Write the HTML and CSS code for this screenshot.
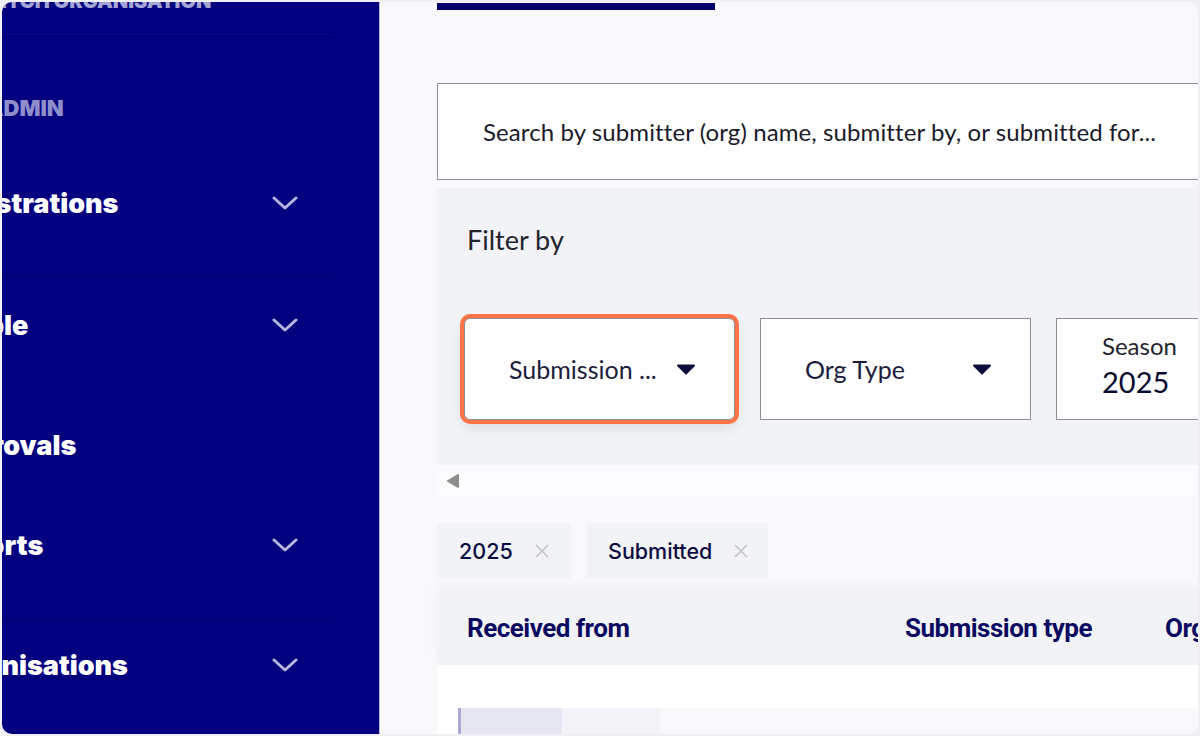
FILE: index.html
```html
<!DOCTYPE html>
<html lang="en">
<head>
<meta charset="utf-8">
<title>Submissions</title>
<link rel="stylesheet" href="styles.css">
</head>
<body>
<div class="frame">
  <aside class="sidebar">
    <div class="side-inner">
      <div class="switch-org">SWITCH ORGANISATION</div>
      <div class="divider divider-light"></div>
      <div class="section-label">ADMIN</div>
      <div class="nav-item nav-reg">
        <span class="nav-text">Registrations</span>
        <svg class="chev" width="26" height="15" viewBox="0 0 26 15"><polyline points="2,2 13,12 24,2" fill="none" stroke="#b6b6de" stroke-width="3" stroke-linecap="round" stroke-linejoin="round"/></svg>
      </div>
      <div class="divider divider-dark divider-people"></div>
      <div class="nav-item nav-people">
        <span class="nav-text">People</span>
        <svg class="chev" width="26" height="15" viewBox="0 0 26 15"><polyline points="2,2 13,12 24,2" fill="none" stroke="#b6b6de" stroke-width="3" stroke-linecap="round" stroke-linejoin="round"/></svg>
      </div>
      <div class="nav-item nav-approvals">
        <span class="nav-text">Approvals</span>
      </div>
      <div class="nav-item nav-reports">
        <span class="nav-text">Reports</span>
        <svg class="chev" width="26" height="15" viewBox="0 0 26 15"><polyline points="2,2 13,12 24,2" fill="none" stroke="#b6b6de" stroke-width="3" stroke-linecap="round" stroke-linejoin="round"/></svg>
      </div>
      <div class="divider divider-dark divider-orgs"></div>
      <div class="nav-item nav-orgs">
        <span class="nav-text">Organisations</span>
        <svg class="chev" width="26" height="15" viewBox="0 0 26 15"><polyline points="2,2 13,12 24,2" fill="none" stroke="#b6b6de" stroke-width="3" stroke-linecap="round" stroke-linejoin="round"/></svg>
      </div>
    </div>
  </aside>

  <main class="main">
    <div class="content">
      <div class="tab-indicator"></div>

      <div class="search-box">
        <span class="search-placeholder">Search by submitter (org) name, submitter by, or submitted for...</span>
      </div>

      <section class="filter-panel">
        <div class="filter-title">Filter by</div>
        <div class="filter-row">
          <button class="filter-btn filter-btn-focus">
            <span class="filter-label">Submission ...</span>
            <svg class="caret" width="20" height="11" viewBox="0 0 20 11"><path d="M2 1.5 H18 L10 9.5 Z" fill="#0e0e3c" stroke="#0e0e3c" stroke-width="2" stroke-linejoin="round"/></svg>
          </button>
          <button class="filter-btn">
            <span class="filter-label">Org Type</span>
            <svg class="caret" width="20" height="11" viewBox="0 0 20 11"><path d="M2 1.5 H18 L10 9.5 Z" fill="#0e0e3c" stroke="#0e0e3c" stroke-width="2" stroke-linejoin="round"/></svg>
          </button>
          <button class="filter-btn filter-btn-season">
            <span class="season-label">Season</span>
            <span class="season-value">2025</span>
          </button>
        </div>
      </section>

      <div class="scroll-row">
        <svg width="14" height="16" viewBox="0 0 14 16"><path d="M12 2 L2 8 L12 14 Z" fill="#8c8c8c" stroke="#8c8c8c" stroke-width="2" stroke-linejoin="round"/></svg>
      </div>

      <div class="chips">
        <div class="chip chip-year">
          <span class="chip-text">2025</span>
          <svg class="chip-x" width="16" height="16" viewBox="0 0 16 16"><path d="M2 2 L14 14 M14 2 L2 14" stroke="#c4c4ce" stroke-width="1.6" fill="none"/></svg>
        </div>
        <div class="chip chip-status">
          <span class="chip-text">Submitted</span>
          <svg class="chip-x" width="16" height="16" viewBox="0 0 16 16"><path d="M2 2 L14 14 M14 2 L2 14" stroke="#c4c4ce" stroke-width="1.6" fill="none"/></svg>
        </div>
      </div>

      <div class="table">
        <div class="thead">
          <div class="th th-received">Received from</div>
          <div class="th th-type">Submission type</div>
          <div class="th th-org">Org Type</div>
        </div>
        <div class="tbody">
          <div class="skeleton">
            <div class="sk-edge"></div>
            <div class="sk-block"></div>
            <div class="sk-mid"></div>
            <div class="sk-rest"></div>
          </div>
        </div>
      </div>
    </div>
  </main>
</div>
</body>
</html>
```

FILE: styles.css
```css
html, body {
  margin: 0;
  padding: 0;
}
body {
  background: #f0f0f4;
  width: 1200px;
  height: 736px;
  overflow: hidden;
}
.frame {
  margin: 2px;
  width: 1196px;
  height: 732px;
  border-radius: 10px;
  overflow: hidden;
  display: flex;
  background: #f9f9fb;
}

/* Sidebar */
.sidebar {
  width: 377px;
  flex: 0 0 377px;
  background: #02007f;
  border-right: 1px solid #b9b9d6;
  overflow: hidden;
  font-family: Inter, "Liberation Sans", sans-serif;
}
.side-inner {
  display: flex;
  flex-direction: column;
  margin-left: -66px;
  width: 406px;
}
.switch-org {
  margin-top: -13px;
  line-height: 24px;
  height: 24px;
  font-size: 20px;
  font-weight: 900;
  color: #a4a4d6;
  padding-left: 30px;
  white-space: nowrap;
}
.divider {
  height: 1px;
  width: 396px;
}
.divider-light {
  margin-top: 21px;
  background: #0b0a8a;
}
.divider-dark {
  background: #00006c;
}
.section-label {
  margin-top: 58px;
  height: 30px;
  line-height: 30px;
  font-size: 22px;
  font-weight: 900;
  color: #8e8ecc;
  padding-left: 50px;
}
.nav-item {
  display: flex;
  align-items: center;
  justify-content: space-between;
  height: 60px;
  padding-right: 44px;
}
.nav-text {
  font-size: 27px;
  font-weight: 900;
  color: #ffffff;
  white-space: nowrap;
}
.chev {
  display: block;
}
.nav-reg { margin-top: 50px; }
.divider-people { margin-top: 43px; }
.nav-people { margin-top: 18px; }
.nav-approvals { margin-top: 60px; }
.nav-reports { margin-top: 40px; }
.divider-orgs { margin-top: 44px; }
.nav-orgs { margin-top: 15px; }

/* Main */
.main {
  flex: 1;
  overflow: hidden;
  background: #f9f9fb;
}
.content {
  margin-left: 57px;
  width: 900px;
  display: flex;
  flex-direction: column;
  font-family: Lato, "Open Sans", sans-serif;
}
.tab-indicator {
  width: 278px;
  height: 7px;
  margin-top: 1px;
  background: #03006e;
}
.search-box {
  margin-top: 73px;
  height: 95px;
  border: 1px solid #8e8e98;
  background: #ffffff;
  display: flex;
  align-items: center;
  padding-left: 45px;
}
.search-placeholder {
  font-size: 24px;
  color: #1b1b2b;
  letter-spacing: 0.1px;
  white-space: nowrap;
}
.filter-panel {
  margin-top: 8px;
  height: 277px;
  box-sizing: border-box;
  background: #f2f3f6;
  padding: 37px 0 0 27px;
}
.filter-title {
  height: 30px;
  line-height: 30px;
  font-size: 27px;
  color: #24242e;
  padding-left: 3px;
}
.filter-row {
  margin-top: 63px;
  display: flex;
  gap: 25px;
}
.filter-btn {
  width: 271px;
  height: 102px;
  box-sizing: border-box;
  background: #ffffff;
  border: 1px solid #8e8e98;
  border-radius: 0;
  display: flex;
  align-items: center;
  justify-content: space-between;
  padding: 0 38px 0 44px;
  font-family: Lato, "Open Sans", sans-serif;
  cursor: pointer;
}
.filter-btn-focus {
  border-radius: 6px;
  box-shadow: 0 0 0 4px #ff7447, 0 6px 16px rgba(10, 10, 60, 0.12);
}
.filter-label {
  font-size: 25px;
  color: #1c1c3c;
  white-space: nowrap;
}
.caret {
  display: block;
}
.filter-btn-season {
  flex-direction: column;
  align-items: flex-start;
  justify-content: flex-start;
  gap: 5px;
  padding-top: 13px;
  padding-left: 45px;
}
.season-label {
  font-size: 24px;
  line-height: 28px;
  color: #24242e;
}
.season-value {
  font-size: 29px;
  line-height: 34px;
  font-weight: 400;
  color: #0a0a30;
}
.scroll-row {
  height: 32px;
  background: #fbfbfd;
  display: flex;
  align-items: center;
  padding-left: 9px;
}
.scroll-row svg { display: block; }

.chips {
  margin-top: 26px;
  display: flex;
  gap: 15px;
}
.chip {
  height: 55px;
  background: #f2f3f6;
  display: flex;
  align-items: center;
  padding-left: 22px;
  box-sizing: border-box;
  gap: 21px;
}
.chip-year { width: 134px; }
.chip-status { width: 182px; }
.chip-text {
  font-family: Inter, "Liberation Sans", sans-serif;
  font-size: 21.5px;
  font-weight: 500;
  color: #0c0c42;
}
.chip-x { display: block; }

.table {
  margin-top: 17px;
  display: flex;
  flex-direction: column;
}
.thead {
  height: 70px;
  box-sizing: border-box;
  padding-bottom: 4px;
  background: #f2f3f6;
  display: flex;
  align-items: center;
  padding-left: 30px;
  box-shadow: 0 -8px 12px rgba(20, 20, 80, 0.035);
}
.th {
  font-family: Roboto, Inter, sans-serif;
  font-size: 26px;
  font-weight: 700;
  letter-spacing: -0.5px;
  color: #0a0a62;
  white-space: nowrap;
}
.th-received { width: 438px; }
.th-type { width: 260px; }
.tbody {
  background: #ffffff;
  height: 80px;
  padding-top: 43px;
  box-sizing: border-box;
}
.skeleton {
  margin-left: 21px;
  height: 30px;
  display: flex;
}
.sk-edge { width: 3px; background: #a9a9d4; }
.sk-block { width: 101px; background: #e6e6f2; }
.sk-mid { width: 98px; background: #f3f3f8; }
.sk-rest { flex: 1; background: #f9f9fb; }
```
